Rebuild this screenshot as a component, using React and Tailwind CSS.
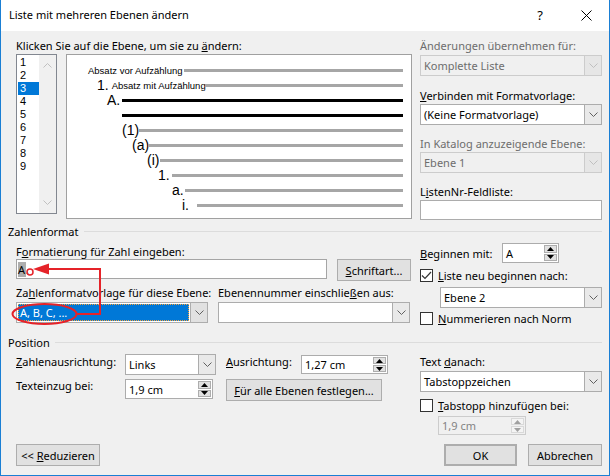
import clsx from "clsx";

function Chevron({ color = "#606060" }) {
    return (
        <svg width="9" height="5" viewBox="0 0 9 5">
            <path d="M0.5 0.5 L4.5 4.5 L8.5 0.5" fill="none" stroke={color} strokeWidth="1" />
        </svg>
    );
}

function Combo({ value, disabled, className }) {
    return (
        <div className={clsx("flex h-[21px] border", disabled ? "border-[#cccccc] bg-[#f0f0f0] text-[#6d6d6d]" : "border-[#acacac] bg-white", className)}>
            <div className="flex flex-1 items-center pl-[3px] leading-[15px]">{value}</div>
            <div className={clsx("flex w-[17px] items-center justify-center border-l", disabled ? "border-[#cccccc] bg-[#e6e6e6]" : "border-[#acacac] bg-[#e9e9e9]")}>
                <Chevron color={disabled ? "#bfbfbf" : "#606060"} />
            </div>
        </div>
    );
}

function SpinArrow({ up, color }) {
    return (
        <svg width="7" height="4" viewBox="0 0 7 4">
            <path d={up ? "M0 4 L3.5 0 L7 4 Z" : "M0 0 L3.5 4 L7 0 Z"} fill={color} />
        </svg>
    );
}

function Spin({ value, disabled, className }) {
    const arrow = disabled ? "#a0a0a0" : "#000000";
    return (
        <div className={clsx("flex border", disabled ? "border-[#cccccc] bg-[#f0f0f0] text-[#838383]" : "border-[#acacac] bg-white", className)}>
            <div className="flex flex-1 items-center pl-[3px] leading-[15px]">{value}</div>
            <div className="flex w-[15px] flex-col gap-px p-px">
                <div className={clsx("flex flex-1 items-center justify-center border", disabled ? "border-[#d9d9d9] bg-[#f4f4f4]" : "border-[#adadad] bg-[#e1e1e1]")}>
                    <SpinArrow up color={arrow} />
                </div>
                <div className={clsx("flex flex-1 items-center justify-center border", disabled ? "border-[#d9d9d9] bg-[#f4f4f4]" : "border-[#adadad] bg-[#e1e1e1]")}>
                    <SpinArrow color={arrow} />
                </div>
            </div>
        </div>
    );
}

function Check({ checked }) {
    return (
        <div className="flex h-[13px] w-[13px] items-center justify-center border border-[#333333] bg-white">
            {checked && (
                <svg width="11" height="9" viewBox="0 0 11 9">
                    <path d="M1 4.5 L4 7.5 L10 1" fill="none" stroke="#333333" strokeWidth="1.2" />
                </svg>
            )}
        </div>
    );
}

function Btn({ children, className }) {
    return (
        <div className={clsx("flex items-center justify-center border border-[#adadad] bg-[#e1e1e1] leading-[15px]", className)}>
            {children}
        </div>
    );
}

function GroupHeader({ title, className }) {
    return (
        <div className={clsx("flex h-[15px] items-center pl-[7px] pr-[7px] leading-[15px]", className)}>
            <span>{title}</span>
            <div className="ml-[5px] h-px flex-1 bg-[#dcdcdc]" />
        </div>
    );
}

const rows = [
    { pl: "pl-[21px]", w: "w-[96px]", text: <span className="text-[9.5px]">Absatz vor Aufzählung</span>, gray: true },
    { pl: "pl-[30px]", w: "w-[108px]", text: <><span>1.</span><span className="ml-[3px] text-[9.5px]">Absatz mit Aufzählung</span></>, gray: true },
    { pl: "pl-[40px]", w: "w-[15px]", text: "A.", gray: false },
    { pl: "pl-[55px]", w: "w-0", text: "", gray: false },
    { pl: "pl-[55px]", w: "w-[17px]", text: "(1)", gray: true },
    { pl: "pl-[65px]", w: "w-[16px]", text: "(a)", gray: true },
    { pl: "pl-[80px]", w: "w-[13px]", text: "(i)", gray: true },
    { pl: "pl-[91px]", w: "w-[14px]", text: "1.", gray: true },
    { pl: "pl-[105px]", w: "w-[13px]", text: "a.", gray: true },
    { pl: "pl-[115px]", w: "w-[15px]", text: "i.", gray: true },
];

function Preview() {
    return (
        <div className="ml-[9px] h-[165px] w-[346px] border border-[#a0a0a0] bg-white pr-[8px] pt-[8px] font-['Liberation_Sans',Arial,sans-serif] text-[14px]">
            {rows.map((r, i) => (
                <div key={i} className={clsx("flex h-[15px] items-center leading-[15px]", r.pl)}>
                    <div className={clsx("flex shrink-0 items-center whitespace-nowrap", r.w)}>{r.text}</div>
                    <div className={clsx("h-[3px] flex-1", r.gray ? "bg-[#a6a6a6]" : "bg-black")} />
                </div>
            ))}
        </div>
    );
}

function Listbox() {
    const items = ["1", "2", "3", "4", "5", "6", "7", "8", "9"];
    return (
        <div className="flex h-[160px] w-[41px] border border-[#828790] bg-white">
            <div className="w-[22px] pl-px pt-px font-['Liberation_Sans',Arial,sans-serif]">
                {items.map((n) => (
                    <div key={n} className={clsx("h-[13px] pl-[2px] text-[11px] leading-[13px]", n === "3" && "bg-[#0078d7] text-white")}>
                        {n}
                    </div>
                ))}
            </div>
            <div className="flex flex-1 flex-col items-center justify-between bg-[#f0f0f0] py-[8px]">
                <svg width="9" height="5" viewBox="0 0 9 5">
                    <path d="M0.5 4.5 L4.5 0.5 L8.5 4.5" fill="none" stroke="#c0c0c0" strokeWidth="1" />
                </svg>
                <Chevron color="#c0c0c0" />
            </div>
        </div>
    );
}

export default function App() {
    return (
        <div className="relative flex h-[476px] w-[610px] flex-col overflow-hidden border-x border-b border-[#1a7fd4] bg-[#f0f0f0] font-['Noto_Sans',sans-serif] text-[11px] text-black">
            <div className="flex h-[31px] shrink-0 items-center bg-white pl-[8px] text-[11px]">
                <span>Liste mit mehreren Ebenen ändern</span>
                <div className="ml-auto flex h-full w-[46px] items-center justify-center text-[13px]">?</div>
                <div className="flex h-full w-[46px] items-center justify-center">
                    <svg width="11" height="11" viewBox="0 0 11 11">
                        <path d="M0.5 0.5 L10.5 10.5 M10.5 0.5 L0.5 10.5" stroke="#000" strokeWidth="1" />
                    </svg>
                </div>
            </div>

            <div className="flex flex-1 flex-col">
                <div className="flex pl-[15px] pr-[7px] pt-[7px]">
                    <div className="w-[396px]">
                        <div className="h-[15px] leading-[15px]">Klicken Sie auf die Ebene, um sie zu <u>ä</u>ndern:</div>
                        <div className="mt-[1px] flex">
                            <Listbox />
                            <Preview />
                        </div>
                    </div>
                    <div className="ml-[8px] w-[182px]">
                        <div className="h-[15px] leading-[15px] text-[#6d6d6d]">Änderungen übernehmen für:</div>
                        <Combo className="mt-[2px]" value="Komplette Liste" disabled />
                        <div className="mt-[12px] h-[15px] leading-[15px]"><u>V</u>erbinden mit Formatvorlage:</div>
                        <Combo className="mt-[1px]" value="(Keine Formatvorlage)" />
                        <div className="mt-[11px] h-[15px] leading-[15px] text-[#6d6d6d]">In Katalog anzuzeigende Ebene:</div>
                        <Combo className="mt-[1px]" value="Ebene 1" disabled />
                        <div className="mt-[11px] h-[15px] leading-[15px]">L<u>i</u>stenNr-Feldliste:</div>
                        <div className="mt-[1px] h-[20px] border border-[#acacac] bg-white" />
                    </div>
                </div>

                <GroupHeader title="Zahlenformat" className="mt-[4px]" />
                <div className="flex pl-[15px] pr-[7px]">
                    <div className="w-[396px]">
                        <div className="mt-[5px] h-[15px] leading-[15px]">F<u>o</u>rmatierung für Zahl eingeben:</div>
                        <div className="flex items-start">
                            <div className="flex h-[20px] w-[311px] items-center border border-[#a5a5a5] bg-white pl-px leading-[15px]">
                                <span className="bg-[#adadad] pr-px">A</span>
                                <span>.</span>
                            </div>
                            <Btn className="ml-[10px] h-[22px] w-[74px]"><span><u>S</u>chriftart...</span></Btn>
                        </div>
                        <div className="mt-[4px] grid h-[15px] grid-cols-[192px_192px] gap-x-[10px] leading-[15px]">
                            <div className="whitespace-nowrap">Za<u>h</u>lenformatvorlage für diese Ebene:</div>
                            <div className="whitespace-nowrap">Ebenennummer einschlie<u>ß</u>en aus:</div>
                        </div>
                        <div className="mt-[2px] grid grid-cols-[192px_192px] gap-x-[10px]">
                            <div className="flex h-[21px] border border-[#adadad] bg-white">
                                <div className="m-px flex flex-1 items-center border border-dotted border-[#f7a23b] bg-[#0078d7] pl-px leading-[15px] text-white">A, B, C, ...</div>
                                <div className="flex w-[17px] items-center justify-center border-l border-[#adadad] bg-[#e1e1e1]">
                                    <Chevron />
                                </div>
                            </div>
                            <Combo value="" />
                        </div>
                    </div>
                    <div className="ml-[8px] w-[182px]">
                        <div className="mt-[4px] flex h-[20px] items-center">
                            <div className="w-[82px] leading-[15px]"><u>B</u>eginnen mit:</div>
                            <Spin className="h-[20px] w-[57px]" value="A" />
                        </div>
                        <div className="mt-[4px] flex h-[17px] items-center">
                            <Check checked />
                            <span className="ml-[5px] leading-[15px]"><u>L</u>iste neu beginnen nach:</span>
                        </div>
                        <Combo className="ml-[20px] mt-[3px] w-[162px]" value="Ebene 2" />
                        <div className="mt-[2px] flex h-[17px] items-center">
                            <Check />
                            <span className="ml-[5px] leading-[15px]"><u>N</u>ummerieren nach Norm</span>
                        </div>
                    </div>
                </div>

                <GroupHeader title="Position" className="mt-[8px]" />
                <div className="flex pl-[15px] pr-[7px]">
                    <div className="w-[396px]">
                        <div className="mt-[4px] flex items-start">
                            <div className="w-[109px] leading-[15px]"><u>Z</u>ahlenausrichtung:</div>
                            <Combo className="w-[91px]" value="Links" />
                            <div className="ml-[10px] w-[75px] leading-[15px]"><u>A</u>usrichtung:</div>
                            <Spin className="mt-px h-[19px] w-[87px]" value="1,27 cm" />
                        </div>
                        <div className="mt-[4px] flex items-start">
                            <div className="-mt-px w-[109px] leading-[15px]">Texteinzu<u>g</u> bei:</div>
                            <Spin className="h-[20px] w-[88px]" value="1,9 cm" />
                            <Btn className="ml-[13px] h-[22px] w-[156px]"><span><u>F</u>ür alle Ebenen festlegen...</span></Btn>
                        </div>
                    </div>
                    <div className="ml-[8px] w-[182px]">
                        <div className="mt-[4px] h-[15px] leading-[15px]">Text <u>d</u>anach:</div>
                        <Combo className="mt-[2px]" value="Tabstoppzeichen" />
                        <div className="mt-[6px] flex h-[15px] items-center">
                            <Check />
                            <span className="ml-[5px] leading-[15px]"><u>T</u>abstopp hinzufügen bei:</span>
                        </div>
                        <Spin className="ml-[18px] mt-[3px] h-[19px] w-[88px]" value="1,9 cm" disabled />
                    </div>
                </div>

                <div className="mt-auto flex pb-[9px] pl-[15px] pr-[7px]">
                    <Btn className="h-[22px] w-[84px]"><span>&lt;&lt; <u>R</u>eduzieren</span></Btn>
                    <Btn className="ml-auto h-[22px] w-[73px] border-2 border-[#0078d7]"><span>OK</span></Btn>
                    <Btn className="ml-[11px] h-[22px] w-[74px]"><span>Abbrechen</span></Btn>
                </div>
            </div>

            <svg className="pointer-events-none absolute left-0 top-0" width="610" height="476" viewBox="0 0 610 476">
                <ellipse cx="43.5" cy="314" rx="32" ry="10" fill="none" stroke="#e52329" strokeWidth="2" />
                <polyline points="76,314 99,314 99,269 46,269" fill="none" stroke="#e52329" strokeWidth="2" />
                <polygon points="32,269 48,263.5 48,274.5" fill="#e52329" />
                <circle cx="29" cy="272" r="3" fill="none" stroke="#e52329" strokeWidth="1.5" />
            </svg>
        </div>
    );
}
